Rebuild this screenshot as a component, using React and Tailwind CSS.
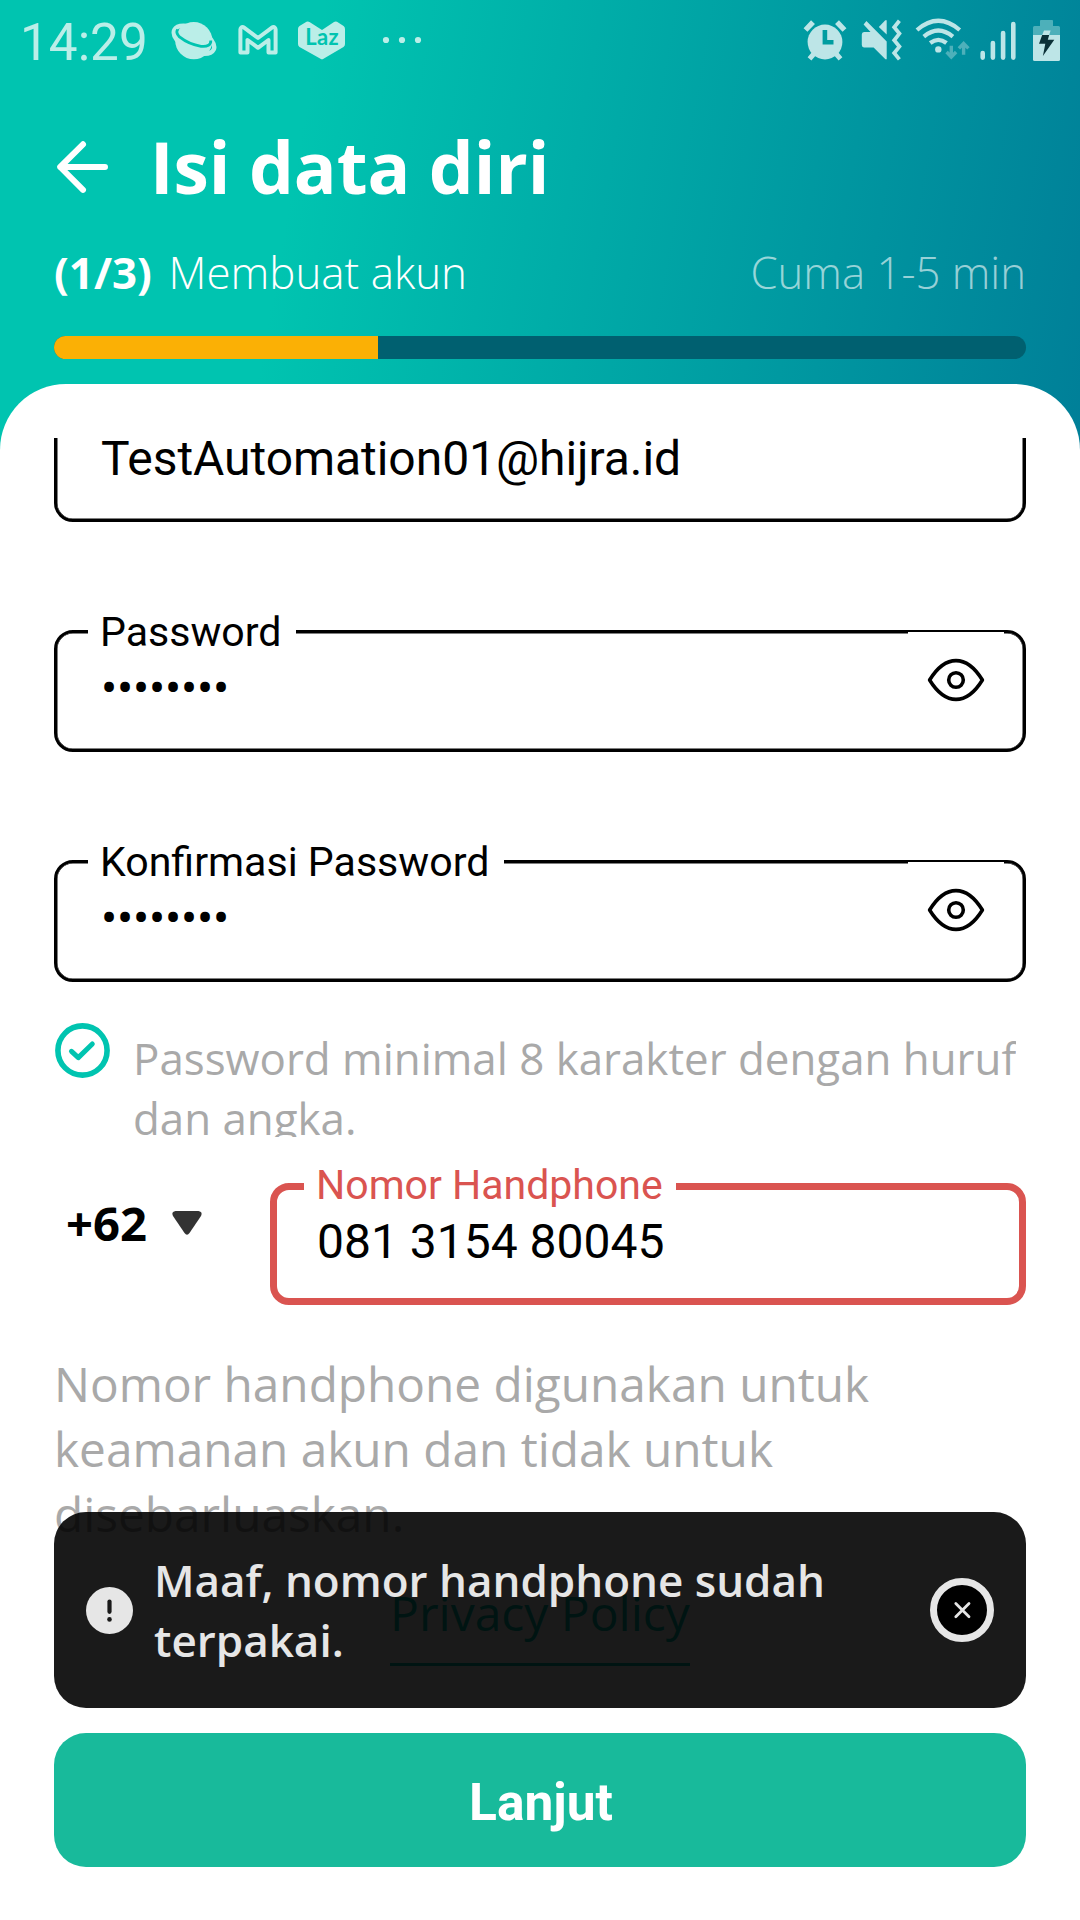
import React from "react";

const LIGHT = "#BBEEE8";
const PALE = "#BDE5E7";
const DIM = "#4DB0BA";

/* ---------- Status bar icons ---------- */

function PlanetIcon() {
  return (
    <svg className="h-20 w-[60px]" viewBox="170 0 60 80" fill="none">
      <circle cx="193.8" cy="40.7" r="18.6" fill={LIGHT} />
      <ellipse cx="194" cy="39.8" rx="22" ry="11" transform="rotate(27 194 39.8)" stroke={LIGHT} strokeWidth="4.4" />
      <path d="M177.6 29.6Q175.4 33 179.5 36.9Q189 44.4 201 46.3Q211 47.2 210.8 40.5" stroke="#00C4B0" strokeWidth="2.8" />
    </svg>
  );
}

function GmailIcon() {
  return (
    <svg className="h-20 w-[60px]" viewBox="230 0 60 80" fill="none">
      <path
        d="M240.4 52.5V29.5Q240.6 26.6 243.4 27.2L258 38L272.6 27.2Q275.4 26.6 275.6 29.5V52.5H268.5V40L258 47.8L247.5 40V52.5Z"
        stroke={LIGHT}
        strokeWidth="4"
        strokeLinejoin="round"
      />
    </svg>
  );
}

function LazIcon() {
  return (
    <svg className="h-20 w-[60px]" viewBox="290 0 60 80">
      <path
        d="M298 29Q298 27 299.5 26L306.5 21.8Q308 21 309.5 22L322 30L334 22Q335.5 21 337 21.8L343.6 26Q345 27 345 29V44Q345 46 343.5 47L323.5 58.8Q322 59.8 320.5 58.8L299.5 47Q298 46 298 44Z"
        fill={LIGHT}
      />
      <text x="305.2" y="45" textLength="33.5" fontSize="22" fontWeight="700" fill="#00C4B0" className="font-['Lato',sans-serif]">
        Laz
      </text>
    </svg>
  );
}

function MoreDots() {
  return (
    <svg className="ml-5 h-20 w-[60px]" viewBox="370 0 60 80" fill={LIGHT}>
      <circle cx="386" cy="40" r="3.1" />
      <circle cx="402" cy="40" r="3.1" />
      <circle cx="418" cy="40" r="3.1" />
    </svg>
  );
}

function AlarmIcon() {
  return (
    <svg className="h-20 w-[55px]" viewBox="800 0 55 80" fill="none" stroke={PALE}>
      <circle cx="825" cy="42" r="17.4" fill={PALE} stroke="none" />
      <path d="M805.5 30L813 22.2M844.5 30L837 22.2" strokeWidth="5.4" />
      <path d="M809.5 58.8L815 52.5M840.5 58.8L835 52.5" strokeWidth="5" />
      <path d="M824.9 30V42.3H833.5" stroke="#009DA0" strokeWidth="4.6" />
    </svg>
  );
}

function MuteVibrateIcon() {
  return (
    <svg className="h-20 w-[55px]" viewBox="855 0 55 80" fill={PALE}>
      <path d="M864 32H870.5L863.6 24.5L866.4 21L886.7 41.5V59.3H885.4L873.6 47.5H864Q861.8 47.3 861.8 45V34.5Q861.8 32.2 864 32Z" />
      <path d="M878.8 27L885.3 20.2H886.7V34.5Z" />
      <path d="M899.4 20.8L894.2 27.2L899.4 33.6L894.2 40.2L899.4 46.6L894.2 53L899.4 59.4" fill="none" stroke={PALE} strokeWidth="3.8" />
    </svg>
  );
}

function WifiIcon() {
  return (
    <svg className="h-20 w-[65px]" viewBox="910 0 65 80" fill="none">
      <g stroke={PALE} strokeWidth="4.2">
        <path d="M917 30Q938.3 11.6 959.7 30" />
        <path d="M923.8 36.6Q938.3 24.4 952.9 36.6" />
        <path d="M930.2 43Q938.3 36.6 946.5 43" />
      </g>
      <circle cx="938.3" cy="49.4" r="3.2" fill={PALE} />
      <g stroke={DIM} strokeWidth="3.4">
        <path d="M951.3 45.8V56.5M946.6 52L951.3 57L956.1 52" />
        <path d="M963.6 54.8V44M958.9 48.4L963.6 43.4L968.4 48.4" />
      </g>
    </svg>
  );
}

function SignalIcon() {
  return (
    <svg className="h-20 w-[50px]" viewBox="975 0 50 80" stroke={PALE} strokeWidth="4.6" strokeLinecap="round">
      <path d="M982.7 53V57.6M992.9 43V57.6M1003.1 33V57.6M1013.3 24V57.6" />
    </svg>
  );
}

function BatteryIcon() {
  return (
    <svg className="h-20 w-[55px]" viewBox="1025 0 55 80">
      <path d="M1040 35V20.8Q1040 20 1041 20H1052Q1053 20 1053 20.8V26H1058.5Q1060 26 1060 27.5V35H1033V27.5Q1033 26 1034.5 26H1040Z" fill={DIM} />
      <path d="M1033 35H1060V59.5Q1060 61 1058.5 61H1034.5Q1033 61 1033 59.5Z" fill={PALE} />
      <path d="M1044 30.5H1050.6L1049.2 35H1042.2Z" fill={PALE} />
      <path d="M1042.2 35H1049.2L1047.8 39.8H1054.3L1042.9 56L1045.3 43.8H1039Z" fill="#0B3138" />
    </svg>
  );
}

function StatusBar() {
  return (
    <div className="flex h-20 items-start pl-5">
      <div className="mt-3 w-[150px] font-['Roboto',sans-serif] text-[51.3px] leading-[61px] text-[#BBEEE8]">14:29</div>
      <PlanetIcon />
      <GmailIcon />
      <LazIcon />
      <MoreDots />
      <div className="flex-1" />
      <AlarmIcon />
      <MuteVibrateIcon />
      <WifiIcon />
      <SignalIcon />
      <BatteryIcon />
    </div>
  );
}

/* ---------- Form pieces ---------- */

function EyeIcon() {
  return (
    <svg className="h-[46px] w-[60px]" viewBox="0 0 60 46" fill="none" stroke="#000" strokeWidth="3.6" strokeLinejoin="round">
      <path d="M3.6 23C11 11 20 3.6 30 3.6S49 11 56.4 23C49 35 40 42.4 30 42.4S11 35 3.6 23Z" />
      <circle cx="30" cy="23" r="7.3" />
    </svg>
  );
}

function PasswordField({ label, notch }) {
  return (
    <div className="relative mt-[108px] h-[122px] rounded-[19px] border-[3px] border-black pl-11 shadow-[inset_0_0_0_0.5px_#000]">
      <label className={`absolute -top-[25px] left-[31px] bg-white pl-3 text-[41.1px] leading-[48px] ${notch}`}>{label}</label>
      <div className="mt-[27px] text-[48px] leading-[57px] tracking-[-0.2px]">••••••••</div>
      <div className="absolute -top-px right-[19px] flex size-24 items-center justify-center bg-white">
        <EyeIcon />
      </div>
    </div>
  );
}

function Toast() {
  return (
    <div className="absolute top-[1512px] right-[54px] left-[54px] flex h-[196px] items-center rounded-[32px] bg-black/[0.898] px-8 text-[#E6E6E6]">
      <svg className="size-[47px]" viewBox="0 0 47 47">
        <circle cx="23.5" cy="23.5" r="23.5" fill="#E6E6E6" />
        <path d="M23.5 14.6V24.8" stroke="#1A1A1A" strokeWidth="4.2" strokeLinecap="round" />
        <circle cx="23.5" cy="32.4" r="2.3" fill="#1A1A1A" />
      </svg>
      <p className="ml-[21px] flex-1 text-[44px] leading-[60px] font-semibold">
        Maaf, nomor handphone sudah
        <br />
        terpakai.
      </p>
      <svg className="size-16" viewBox="0 0 64 64">
        <circle cx="32" cy="32" r="28.5" fill="#000" stroke="#E6E6E6" strokeWidth="7" />
        <path d="M25.8 25.6L39 38.8M39 25.6L25.8 38.8" stroke="#E6E6E6" strokeWidth="2.8" strokeLinecap="round" />
      </svg>
    </div>
  );
}

export default function App() {
  return (
    <div className="relative h-[1920px] w-[1080px] overflow-hidden bg-white font-['Open_Sans',sans-serif] text-black">
      <header className="h-[450px] bg-[linear-gradient(100deg,#00C4B0_28%,#007F98_100%)] text-white">
        <StatusBar />
        <div className="px-[54px]">
          <div className="flex items-start pt-[38px]">
            <svg className="mt-[19px] size-[60px]" viewBox="54 137 60 60" fill="none" stroke="#fff" strokeWidth="6" strokeLinecap="round" strokeLinejoin="round">
              <path d="M105 167H60.2M83 144.3L60.2 167L83 189.8" />
            </svg>
            <h1 className="ml-9 text-[71px] leading-[97px] font-bold">Isi data diri</h1>
          </div>
          <div className="mt-[27px] flex h-[60px] items-baseline leading-[60px]">
            <span className="w-[114.5px] text-[43.8px] font-bold">(1/3)</span>
            <span className="flex-1 text-[43.9px] font-light">Membuat akun</span>
            <span className="text-[43.7px] font-light text-white/60">Cuma 1-5 min</span>
          </div>
          <div className="mt-[34px] h-[23px] overflow-hidden rounded-full bg-[#006070]">
            <div className="h-full w-1/3 bg-[#FBB005]" />
          </div>
        </div>
      </header>

      <main className="relative -mt-[66px] h-[1536px] rounded-t-[66px] bg-white px-[54px] pt-[54px]">
        {/* The e-mail field is scrolled partly under the top edge of the sheet */}
        <div className="flex h-[84px] flex-col justify-end overflow-hidden font-['Roboto',sans-serif]">
          <div className="h-[122px] shrink-0 rounded-[19px] border-[3px] border-black pl-11 shadow-[inset_0_0_0_0.5px_#000]">
            <div className="mt-[27px] text-[48px] leading-[57px] tracking-[-0.05px]">TestAutomation01@hijra.id</div>
          </div>
        </div>

        <div className="font-['Roboto',sans-serif]">
          <PasswordField label="Password" notch="w-[208px]" />
          <PasswordField label="Konfirmasi Password" notch="w-[416px]" />
        </div>

        <div className="mt-[41px] flex h-[114px] items-start">
          <svg className="ml-px size-[55px]" viewBox="0 0 55 55" fill="none" stroke="#00C4B0">
            <circle cx="27.5" cy="27.5" r="24.6" strokeWidth="5.6" />
            <path d="M16.5 28.3L23.3 34.6L37.3 21" strokeWidth="5" strokeLinecap="round" strokeLinejoin="round" />
          </svg>
          <p className="mt-[5px] ml-[23px] h-[109px] overflow-hidden text-[43.86px] leading-[60px] whitespace-nowrap text-[#A9A9A9]">
            Password minimal 8 karakter dengan huruf
            <br />
            dan angka.
          </p>
        </div>

        <div className="mt-[46px] flex items-start">
          <div className="ml-3 flex w-[204px] items-start">
            <span className="mt-2 w-[106px] text-[47.2px] leading-[65px] font-bold">+62</span>
            <svg className="mt-7 h-6 w-[30px]" viewBox="0 0 30 24">
              <path d="M3.5 0H26.5Q31 1 29 5L17.5 22Q15 25.5 12.5 22L1 5Q-1 1 3.5 0Z" fill="#333" />
            </svg>
          </div>
          <div className="relative h-[122px] flex-1 rounded-[19px] border-[7px] border-[#DA5450] pl-10 font-['Roboto',sans-serif]">
            <label className="absolute -top-[29px] left-[27px] w-[372px] bg-white pl-3 text-[41px] leading-[48px] text-[#DA5450]">Nomor Handphone</label>
            <div className="mt-[23px] text-[48px] leading-[57px] tracking-[-0.01px]">081 3154 80045</div>
          </div>
        </div>

        <p className="mt-[46px] text-[47.75px] leading-[65px] text-[#A9A9A9]">
          Nomor handphone digunakan untuk
          <br />
          keamanan akun dan tidak untuk
          <br />
          disebarluaskan.
        </p>

        <div className="mt-[34px] flex justify-center">
          <a className="h-[86px] border-b-[3px] border-[#00C4B0] text-[48px] leading-[65px] text-[#00C4B0]">Privacy Policy</a>
        </div>

        <button className="mt-[67px] flex h-[134px] w-full items-center justify-center rounded-[32px] bg-[#18BA9B] pt-1 pl-0.5 font-['Roboto',sans-serif] text-[51.5px] leading-[61px] font-bold text-white">
          Lanjut
        </button>
      </main>

      <Toast />
    </div>
  );
}
